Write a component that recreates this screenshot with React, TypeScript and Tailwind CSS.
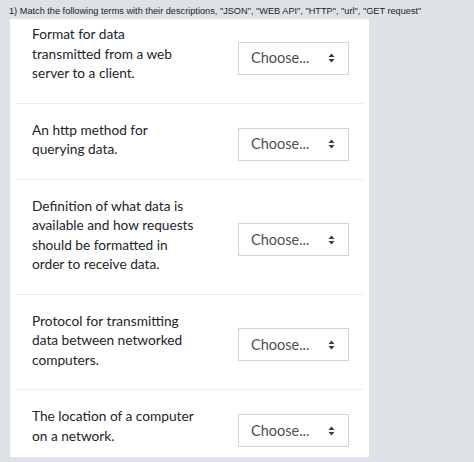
const ROWS = [
  { lines: ['Format for data', 'transmitted from a web', 'server to a client.'], first: true },
  { lines: ['An http method for', 'querying data.'] },
  { lines: ['Definition of what data is', 'available and how requests', 'should be formatted in', 'order to receive data.'] },
  { lines: ['Protocol for transmitting', 'data between networked', 'computers.'] },
  { lines: ['The location of a computer', 'on a network.'], last: true },
];

const SortIcon = () => (
  <svg width="7" height="10" viewBox="0 0 7 10" className="shrink-0">
    <path d="M3.5 0.5 L6.5 4 H0.5 Z" fill="#343a40" />
    <path d="M3.5 9.5 L6.5 6 H0.5 Z" fill="#343a40" />
  </svg>
);

const Choose = () => (
  <div className="mt-[5px] flex h-[33px] w-[111px] items-center justify-between border border-[#ced4da] bg-white pl-[12px] pr-[13px] text-[14.5px] text-[#495057]">
    <span>Choose...</span>
    <SortIcon />
  </div>
);

export default function App() {
  return (
    <div className="h-[462px] w-[474px] overflow-hidden bg-[#dee2e6] font-['Lato',sans-serif]">
      <div className="pl-[9px] pt-[5px] pb-[2px] font-['Liberation_Sans',sans-serif] text-[9.2px] leading-[12px] text-[#222]">
        1) Match the following terms with their descriptions, "JSON", "WEB API", "HTTP", "url", "GET request"
      </div>
      <div className="ml-[10px] h-[438px] w-[359px] bg-white px-[6px]">
        {ROWS.map((row, i) => (
          <div
            key={i}
            className={
              'flex items-center justify-between pl-[16px] pr-[14px] ' +
              (row.first ? 'pt-[5px] ' : 'pt-[16px] ') +
              (row.last ? 'pb-[7px]' : 'pb-[15px] border-b border-[#e9ecef]')
            }
          >
            <div className="mb-[5px] text-[13.7px] leading-[19.5px] text-[#212529]">
              {row.lines.map((l) => (
                <div key={l} className="whitespace-nowrap">{l}</div>
              ))}
            </div>
            <Choose />
          </div>
        ))}
      </div>
    </div>
  );
}
